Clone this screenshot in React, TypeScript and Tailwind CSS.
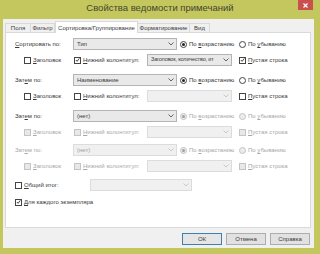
import React from "react";

const font = "font-['Liberation_Sans',Arial,sans-serif]";

const Chevron = ({ disabled }: { disabled?: boolean }) => (
  <svg width="6" height="4" viewBox="0 0 6 4" className="shrink-0">
    <path
      d="M0.5 0.5 L3 3 L5.5 0.5"
      fill="none"
      stroke={disabled ? "#c4c4c4" : "#555"}
      strokeWidth="0.9"
    />
  </svg>
);

const Select = ({
  text,
  className,
  textClass = "",
  disabled,
}: {
  text?: string;
  className: string;
  textClass?: string;
  disabled?: boolean;
}) => (
  <div
    className={`h-[12px] flex items-center justify-between gap-[1px] pl-[3px] pr-[2px] border ${className} ${
      disabled
        ? "border-[#dcdcdc] bg-[#f0f0f0] text-[#a0a0a0]"
        : "border-[#b4b4b4] bg-[#e9e9e9] text-[#3a3a3a]"
    }`}
  >
    <span className={`whitespace-nowrap leading-none ${textClass}`}>{text}</span>
    <Chevron disabled={disabled} />
  </div>
);

const Check = ({
  label,
  checked,
  disabled,
  className = "",
}: {
  label: React.ReactNode;
  checked?: boolean;
  disabled?: boolean;
  className?: string;
}) => (
  <div className={`flex items-center gap-[2px] ${className}`}>
    <div
      className={`w-[7px] h-[7px] border shrink-0 flex items-center justify-center ${
        disabled ? "border-[#c4c4c4] bg-[#e8e8e8]" : "border-[#444] bg-white"
      }`}
    >
      {checked && (
        <svg width="6" height="6" viewBox="0 0 6 6">
          <path d="M1 3 L2.5 4.6 L5.2 1" fill="none" stroke="#222" strokeWidth="1" />
        </svg>
      )}
    </div>
    <span className={`leading-none whitespace-nowrap ${disabled ? "text-[#a8a8a8]" : "text-[#3a3a3a]"}`}>
      {label}
    </span>
  </div>
);

const Radio = ({
  label,
  checked,
  disabled,
  className = "",
}: {
  label: React.ReactNode;
  checked?: boolean;
  disabled?: boolean;
  className?: string;
}) => (
  <div className={`flex items-center gap-[2px] ${className}`}>
    <div
      className={`w-[7px] h-[7px] rounded-full border shrink-0 flex items-center justify-center ${
        disabled ? "border-[#c4c4c4] bg-[#ececec]" : "border-[#444] bg-white"
      }`}
    >
      {checked && (
        <div className={`w-[3px] h-[3px] rounded-full ${disabled ? "bg-[#a0a0a0]" : "bg-[#222]"}`} />
      )}
    </div>
    <span className={`leading-none whitespace-nowrap ${disabled ? "text-[#a8a8a8]" : "text-[#3a3a3a]"}`}>
      {label}
    </span>
  </div>
);

const U = ({ children }: { children: React.ReactNode }) => <span className="underline">{children}</span>;

const SortRow = ({
  label,
  value,
  selDisabled,
  radioDisabled,
  labelDisabled,
  className,
}: {
  label: React.ReactNode;
  value: string;
  selDisabled?: boolean;
  radioDisabled?: boolean;
  labelDisabled?: boolean;
  className: string;
}) => (
  <div className={`h-[12px] flex items-center ${className}`}>
    <span className={`w-[58px] leading-none ${labelDisabled ? "text-[#a8a8a8]" : "text-[#3a3a3a]"}`}>{label}</span>
    <Select text={value} className="w-[104px]" disabled={selDisabled} />
    <Radio
      className="ml-[3px] w-[59px]"
      checked
      disabled={radioDisabled}
      label={
        <>
          По <U>в</U>озрастанию
        </>
      }
    />
    <Radio
      disabled={radioDisabled}
      label={
        <>
          По <U>у</U>быванию
        </>
      }
    />
  </div>
);

const OptRow = ({
  disabled,
  header,
  footer,
  footerText,
  empty,
  className,
}: {
  disabled?: boolean;
  header?: boolean;
  footer?: boolean;
  footerText?: string;
  empty?: boolean;
  className: string;
}) => (
  <div className={`h-[12px] flex items-center pl-[9px] ${className}`}>
    <Check
      className="w-[50px]"
      disabled={disabled}
      checked={header}
      label={
        <>
          <U>З</U>аголовок
        </>
      }
    />
    <Check
      className="w-[73px]"
      disabled={disabled}
      checked={footer}
      label={
        <>
          <U>Н</U>ижний колонтитул:
        </>
      }
    />
    <Select
      text={footerText}
      className="w-[85px]"
      textClass="text-[5.5px] tracking-[-0.15px]"
      disabled={!footer}
    />
    <Check
      className="ml-[7px]"
      disabled={disabled}
      checked={empty}
      label={
        <>
          <U>П</U>устая строка
        </>
      }
    />
  </div>
);

const tabs = ["Поля", "Фильтр", "Сортировка/Группирование", "Форматирование", "Вид"];
const tabW = ["w-[26px]", "w-[25px]", "w-[83px]", "w-[53px]", "w-[21px]"];

export default function App() {
  return (
    <div className={`w-[320px] h-[254px] bg-[#c4c75e] flex flex-col text-[6px] ${font}`}>
      <div className="h-[19px] flex items-start">
        <div className="w-[22px]" />
        <div className="flex-1 text-center text-[9.5px] text-[#45452f] pt-[3px] leading-none">
          Свойства ведомости примечаний
        </div>
        <div className="w-[15px] h-[10px] bg-[#c9504e] flex items-center justify-center mr-[7px]">
          <svg width="5" height="5" viewBox="0 0 5 5">
            <path d="M0.5 0.5 L4.5 4.5 M4.5 0.5 L0.5 4.5" stroke="white" strokeWidth="1.2" />
          </svg>
        </div>
      </div>

      <div className="flex-1 ml-[3px] mr-[6px] mb-[6px] bg-[#f0f0f0] flex flex-col pl-[2px] pr-[3px] pt-[2px]">
        <div className="h-[11px] flex items-end">
          {tabs.map((t, i) => (
            <div
              key={t}
              className={`${tabW[i]} flex items-center justify-center border border-[#d9d9d9] leading-none whitespace-nowrap text-[#3a3a3a] ${
                i === 2
                  ? "h-[12px] bg-white border-b-0 -mb-px relative z-10"
                  : "h-[9px] bg-[#f0f0f0] border-b-0 -ml-px first:ml-0"
              }`}
            >
              {t}
            </div>
          ))}
        </div>

        <div className="h-[196px] bg-white border border-[#d9d9d9] flex flex-col pl-[9px] pt-[5px]">
          <SortRow
            className=""
            label={
              <>
                <U>С</U>ортировать по:
              </>
            }
            value="Тип"
          />
          <OptRow className="mt-[4px]" footer empty footerText="Заголовок, количество, ит" />

          <SortRow
            className="mt-[8px]"
            label={
              <>
                Зат<U>е</U>м по:
              </>
            }
            value="Наименование"
          />
          <OptRow className="mt-[4px]" />

          <SortRow
            className="mt-[8px]"
            label={
              <>
                Зат<U>е</U>м по:
              </>
            }
            value="(нет)"
            radioDisabled
          />
          <OptRow className="mt-[4px]" disabled />

          <SortRow
            className="mt-[6px]"
            label={
              <>
                Зат<U>е</U>м по:
              </>
            }
            value="(нет)"
            labelDisabled
            selDisabled
            radioDisabled
          />
          <OptRow className="mt-[4px]" disabled />

          <div className="h-[12px] mt-[7px] flex items-center">
            <Check
              className="w-[75px]"
              label={
                <>
                  <U>О</U>бщий итог:
                </>
              }
            />
            <Select className="w-[102px]" disabled />
          </div>

          <div className="h-[12px] mt-[5px] flex items-center">
            <Check
              checked
              label={
                <>
                  <U>Д</U>ля каждого экземпляра
                </>
              }
            />
          </div>
        </div>

        <div className="flex justify-end gap-[4px] mt-[5px] pr-[1px]">
          <button className="w-[40px] h-[12px] border border-[#3c7fb1] bg-[#e5e5e5] text-[#3a3a3a] leading-none">
            ОК
          </button>
          <button className="w-[40px] h-[12px] border border-[#adadad] bg-[#e1e1e1] text-[#3a3a3a] leading-none">
            Отмена
          </button>
          <button className="w-[40px] h-[12px] border border-[#adadad] bg-[#e1e1e1] text-[#3a3a3a] leading-none">
            Справка
          </button>
        </div>
      </div>
    </div>
  );
}
